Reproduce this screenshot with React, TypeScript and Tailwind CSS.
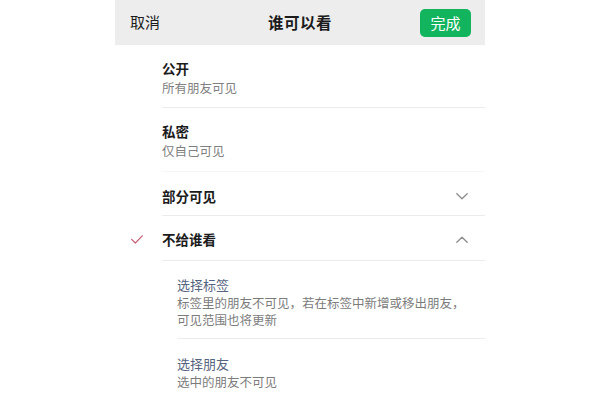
import type { ReactNode } from "react";

function ChevronDown() {
  return (
    <svg width="12" height="7" viewBox="0 0 12 7" fill="none">
      <polyline points="0.8,0.8 6,5.8 11.2,0.8" stroke="#8c8c8c" strokeWidth="1.3" strokeLinecap="round" strokeLinejoin="round" />
    </svg>
  );
}

function ChevronUp() {
  return (
    <svg width="12" height="7" viewBox="0 0 12 7" fill="none">
      <polyline points="0.8,6.2 6,1.2 11.2,6.2" stroke="#8c8c8c" strokeWidth="1.3" strokeLinecap="round" strokeLinejoin="round" />
    </svg>
  );
}

function Check() {
  return (
    <svg width="12" height="9" viewBox="0 0 12 9" fill="none">
      <polyline points="0.7,4.3 4.3,8 11.3,0.8" stroke="#c4627a" strokeWidth="1.2" strokeLinecap="round" strokeLinejoin="round" />
    </svg>
  );
}

function OptionRow({
  title,
  sub,
  checked,
  right,
  className,
  border = "border-[#ececec]",
}: {
  title: string;
  sub?: string;
  checked?: boolean;
  right?: ReactNode;
  className: string;
  border?: string;
}) {
  return (
    <div className="flex">
      <div className="w-[47px] shrink-0 flex justify-end pr-[19px] pt-[19px]">{checked && <Check />}</div>
      <div className={`flex-1 flex items-start border-b ${border} ${className}`}>
        <div className="flex-1">
          <div className="text-[13.5px] leading-[19px] font-bold text-[#1b1b1b]">{title}</div>
          {sub && <div className="text-[12.5px] leading-[19px] text-[#808080]">{sub}</div>}
        </div>
        {right && <div className="h-[19px] flex items-center pr-[17px]">{right}</div>}
      </div>
    </div>
  );
}

export default function App() {
  return (
    <div
      className="w-[600px] h-[402px] bg-white overflow-hidden"
      style={{ fontFamily: '"Noto Sans CJK SC", "Noto Sans", sans-serif' }}
    >
      <div className="w-[370px] mx-auto">
        <header className="h-[45px] bg-[#ededed] grid grid-cols-[1fr_auto_1fr] items-center px-[14px]">
          <span className="text-[15px] text-[#1b1b1b] pl-px">取消</span>
          <span className="text-[15.5px] font-semibold text-[#1b1b1b] tracking-[0.5px]">谁可以看</span>
          <div className="flex justify-end">
            <button className="w-[51px] h-[28px] rounded-[5px] bg-[#12b45e] text-white text-[15px] leading-none">
              完成
            </button>
          </div>
        </header>

        <OptionRow title="公开" sub="所有朋友可见" className="pt-[14px] pb-[10px]" />
        <OptionRow title="私密" sub="仅自己可见" className="pt-[14px] pb-[11px]" border="border-[#f6f6f6]" />
        <OptionRow title="部分可见" right={<ChevronDown />} className="pt-[15px] pb-[9px]" />
        <OptionRow title="不给谁看" checked right={<ChevronUp />} className="pt-[14px] pb-[11px]" />

        <div className="pl-[62px]">
          <div className="border-b border-[#ececec] pt-[13.5px] pb-[9.5px]">
            <div className="text-[13px] leading-[19px] text-[#56637e]">选择标签</div>
            <div className="text-[12.5px] leading-[17.5px] text-[#7c7c7c]">
              标签里的朋友不可见，若在标签中新增或移出朋友，
              <br />
              可见范围也将更新
            </div>
          </div>
          <div className="pt-[14.5px]">
            <div className="text-[13px] leading-[19px] text-[#56637e]">选择朋友</div>
            <div className="text-[12.5px] leading-[17.5px] text-[#7c7c7c]">选中的朋友不可见</div>
          </div>
        </div>
      </div>
    </div>
  );
}
